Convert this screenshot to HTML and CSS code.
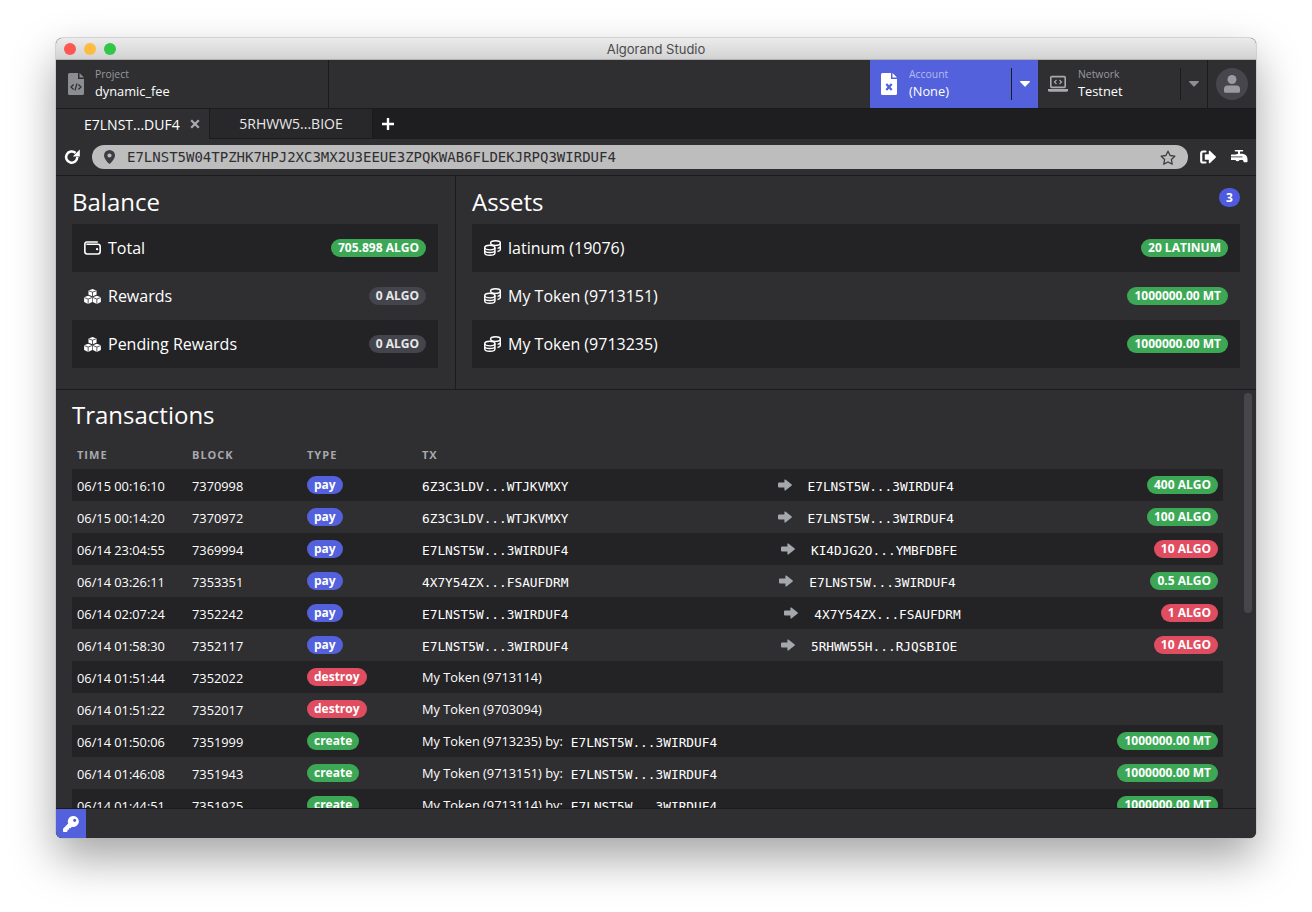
FILE: index.html
```html
<!DOCTYPE html>
<html lang="en">
<head>
<meta charset="utf-8">
<title>Algorand Studio</title>
<link rel="stylesheet" href="styles.css">
</head>
<body>
<svg class="defs" aria-hidden="true">
  <symbol id="file" viewBox="0 0 16 22"><path fill="currentColor" d="M1.500 0H10v6h6v14.500a1.500 1.500 0 0 1-1.500 1.500h-13A1.500 1.500 0 0 1 0 20.500v-19A1.500 1.500 0 0 1 1.500 0zM11.500 0 16 4.500h-4.500z"/></symbol>
  <symbol id="wallet" viewBox="0 0 16 14" preserveAspectRatio="none"><path d="M13 1H3A2.200 2.200 0 0 0 .8 3.200v7.600A2.200 2.200 0 0 0 3 13h10a2.200 2.200 0 0 0 2.200-2.200V5.500A2.200 2.200 0 0 0 13 3.300H2.200" fill="none" stroke="currentColor" stroke-width="1.500"/><circle cx="12.300" cy="8.200" r="1.100" fill="currentColor"/></symbol>
  <symbol id="cubes" viewBox="0 0 16 14" preserveAspectRatio="none"><path fill="currentColor" d="M8 0l3.800 1.400v3.900L8 6.800 4.200 5.300V1.400zM3.900 6.300l3.800 1.500v4.300l-3.800 1.900-3.800-1.900V7.800zM12.100 6.300l3.800 1.500v4.300l-3.800 1.900-3.800-1.900V7.800z"/><path fill="none" stroke="#232325" stroke-width=".7" d="M4.400 1.600 8 3l3.600-1.400M8 3v3.500M.3 8 3.900 9.400 7.500 8M3.900 9.400v4.400M8.500 8l3.600 1.400L15.700 8M12.100 9.400v4.400"/></symbol>
  <symbol id="coins" viewBox="0 0 16 16" preserveAspectRatio="none"><g fill="none" stroke="currentColor" stroke-width="1.350"><ellipse cx="10.800" cy="3" rx="4.600" ry="2.300"/><path d="M15.400 3v6.500c0 1-1.200 1.700-2.700 2M15.400 6.300c0 1-1.200 1.800-2.700 2"/><ellipse cx="5.500" cy="7.500" rx="4.800" ry="2.300"/><path d="M.7 7.500v5.500c0 1.300 2.200 2.200 4.800 2.200s4.800-.9 4.800-2.200V7.500M.7 10.300c0 1.300 2.200 2.200 4.800 2.200s4.800-.9 4.800-2.200"/></g></symbol>
  <symbol id="arrow" viewBox="0 0 14 12"><path fill="currentColor" d="M7.400.6l6 4.600a1 1 0 0 1 0 1.600l-6 4.600a.6.6 0 0 1-1-.5V8.500H1a1 1 0 0 1-1-1v-3a1 1 0 0 1 1-1h5.400V1.100a.6.6 0 0 1 1-.5z"/></symbol>
  <symbol id="caret" viewBox="0 0 10 6"><path fill="currentColor" d="M.6 0h8.800c.5 0 .8.600.4 1L5.400 5.600a.6.6 0 0 1-.8 0L.2 1C-.2.600.1 0 .6 0z"/></symbol>
</svg>
<div class="window">
  <div class="titlebar">
    <span class="light red"></span><span class="light yellow"></span><span class="light green"></span>
    <span class="title">Algorand Studio</span>
  </div>
  <header class="topbar">
    <div class="cell project">
      <svg class="i-file dim" width="16" height="22"><use href="#file"/><path d="M5.600 11.500 3 14l2.600 2.500M10.400 11.500 13 14l-2.600 2.500M9 10.500 7 17.500" fill="none" stroke="#2f2f32" stroke-width="1.200"/></svg>
      <div class="cell-text"><span class="cell-label">Project</span><span class="cell-value">dynamic_fee</span></div>
    </div>
    <div class="spacer"></div>
    <div class="cell account">
      <svg class="i-file" width="16" height="22"><use href="#file"/><path d="M5.300 11 10.700 17M10.700 11 5.300 17" fill="none" stroke="#5361dc" stroke-width="2.200"/></svg>
      <div class="cell-text"><span class="cell-label">Account</span><span class="cell-value">(None)</span></div>
      <div class="drop"><svg class="caret" width="10" height="6"><use href="#caret"/></svg></div>
    </div>
    <div class="cell network">
      <svg class="i-laptop" width="20" height="18" viewBox="0 0 20 18"><rect x="2.800" y="1.600" width="14.400" height="10.800" rx="1" fill="none" stroke="currentColor" stroke-width="1.600"/><path d="M0 14h20v1.200a1.500 1.500 0 0 1-1.500 1.500h-17A1.500 1.500 0 0 1 0 15.200z" fill="currentColor"/><path d="M8.500 5 6.500 7l2 2M11.500 5l2 2-2 2" fill="none" stroke="currentColor" stroke-width="1.200"/></svg>
      <div class="cell-text"><span class="cell-label">Network</span><span class="cell-value">Testnet</span></div>
      <div class="drop"><svg class="caret" width="10" height="6"><use href="#caret"/></svg></div>
    </div>
    <div class="user">
      <div class="avatar"><svg width="16" height="18" viewBox="0 0 16 18"><circle cx="8" cy="4.500" r="4.500" fill="currentColor"/><path d="M3.500 10.500h9A3.500 3.500 0 0 1 16 14v2.200a1.500 1.500 0 0 1-1.500 1.500h-13A1.500 1.500 0 0 1 0 16.200V14a3.500 3.500 0 0 1 3.500-3.500z" fill="currentColor"/></svg></div>
    </div>
  </header>
  <nav class="tabs">
    <div class="tab active"><span>E7LNST...DUF4</span><svg class="close" width="10" height="10" viewBox="0 0 10 10"><path d="M1.200 1.200l7.600 7.600M8.800 1.200 1.200 8.800" stroke="currentColor" stroke-width="2.200" fill="none"/></svg></div>
    <div class="tab second"><span>5RHWW5...BIOE</span></div>
    <div class="add"><svg width="12" height="12" viewBox="0 0 12 12"><path d="M6 .5v11M.5 6h11" stroke="currentColor" stroke-width="2.400" fill="none" stroke-linecap="round"/></svg></div>
  </nav>
  <div class="addressbar">
    <svg class="reload" width="16" height="16" viewBox="0 0 16 16"><path d="M13.300 8a5.600 5.600 0 1 1-1.700-4" fill="none" stroke="currentColor" stroke-width="2.500"/><path d="M15.800.6v7H8.800z" fill="currentColor"/></svg>
    <div class="pill">
      <svg class="pin" width="11" height="14" viewBox="0 0 11 14"><path fill-rule="evenodd" fill="#3d3e42" d="M5.500 0A5.500 5.500 0 0 1 11 5.500C11 8.500 7 13 5.500 14 4 13 0 8.500 0 5.500A5.500 5.500 0 0 1 5.500 0zm0 3.400a2.100 2.100 0 1 0 0 4.200 2.100 2.100 0 0 0 0-4.200z"/></svg>
      <span class="address">E7LNST5W04TPZHK7HPJ2XC3MX2U3EEUE3ZPQKWAB6FLDEKJRPQ3WIRDUF4</span>
      <svg class="star" width="16" height="15" viewBox="0 0 16 15"><path d="M8 1.200l2.100 4.300 4.700.7-3.400 3.300.8 4.700L8 12l-4.200 2.200.8-4.700L1.200 6.200l4.700-.7z" fill="none" stroke="#3d3e42" stroke-width="1.300" stroke-linejoin="round"/></svg>
    </div>
    <svg class="signout" width="16" height="14" viewBox="0 0 16 14"><path d="M5.500 1.500H3A1.800 1.800 0 0 0 1.200 3.300v7.400A1.800 1.800 0 0 0 3 12.500h2.500" fill="none" stroke="currentColor" stroke-width="2.200" stroke-linecap="round"/><path fill="currentColor" d="M9.800.8l5.800 5.500a1 1 0 0 1 0 1.400l-5.800 5.500a.6.6 0 0 1-1-.4V9.700H4.800V4.300h4V1.200a.6.6 0 0 1 1-.4z"/></svg>
    <svg class="faucet" width="17" height="14" viewBox="0 0 17 14"><path fill="currentColor" d="M4.500 0h7a.8.800 0 0 1 0 1.600h-2.500v2.200h2.300a5.200 5.200 0 0 1 5.200 5.200v2.600a.6.6 0 0 1-.6.6h-2.800a.6.6 0 0 1-.6-.6c0-1-.6-1.600-1.500-1.600H8.600c-.5.800-1.200 1.200-2.100 1.200s-1.600-.4-2.100-1.200H.6a.6.6 0 0 1-.6-.6V5a.6.6 0 0 1 .6-.6h3.900l2.500-.6V1.600H4.500a.8.800 0 0 1 0-1.600z"/><rect y="6.500" width="11.500" height=".8" fill="#2f2f32"/></svg>
  </div>
  <main class="content">
    <section class="summary">
      <div class="panel balance">
        <h2>Balance</h2>
        <ul class="list">
          <li><svg class="li-icon" width="17" height="14"><use href="#wallet"/></svg><span class="li-text">Total</span><span class="badge green">705.898 ALGO</span></li>
          <li><svg class="li-icon" width="17" height="15"><use href="#cubes"/></svg><span class="li-text">Rewards</span><span class="badge gray">0 ALGO</span></li>
          <li><svg class="li-icon" width="17" height="15"><use href="#cubes"/></svg><span class="li-text">Pending Rewards</span><span class="badge gray">0 ALGO</span></li>
        </ul>
      </div>
      <div class="panel assets">
        <h2>Assets</h2>
        <span class="count">3</span>
        <ul class="list">
          <li><svg class="li-icon" width="17" height="16"><use href="#coins"/></svg><span class="li-text">latinum (19076)</span><span class="badge green">20 LATINUM</span></li>
          <li><svg class="li-icon" width="17" height="16"><use href="#coins"/></svg><span class="li-text">My Token (9713151)</span><span class="badge green">1000000.00 MT</span></li>
          <li><svg class="li-icon" width="17" height="16"><use href="#coins"/></svg><span class="li-text">My Token (9713235)</span><span class="badge green">1000000.00 MT</span></li>
        </ul>
      </div>
    </section>
    <section class="transactions">
      <h2>Transactions</h2>
      <div class="thead"><span>Time</span><span>Block</span><span>Type</span><span>TX</span></div>
      <div class="row"><span>06/15 00:16:10</span><span>7370998</span><span class="type"><b class="badge blue">pay</b></span>
        <div class="tx"><code class="from">6Z3C3LDV...WTJKVMXY</code><div class="dest"><svg class="arrow" width="14" height="12"><use href="#arrow"/></svg><code>E7LNST5W...3WIRDUF4</code></div><b class="badge green">400 ALGO</b></div></div>
      <div class="row"><span>06/15 00:14:20</span><span>7370972</span><span class="type"><b class="badge blue">pay</b></span>
        <div class="tx"><code class="from">6Z3C3LDV...WTJKVMXY</code><div class="dest"><svg class="arrow" width="14" height="12"><use href="#arrow"/></svg><code>E7LNST5W...3WIRDUF4</code></div><b class="badge green">100 ALGO</b></div></div>
      <div class="row"><span>06/14 23:04:55</span><span>7369994</span><span class="type"><b class="badge blue">pay</b></span>
        <div class="tx"><code class="from">E7LNST5W...3WIRDUF4</code><div class="dest"><svg class="arrow" width="14" height="12"><use href="#arrow"/></svg><code>KI4DJG2O...YMBFDBFE</code></div><b class="badge red">10 ALGO</b></div></div>
      <div class="row"><span>06/14 03:26:11</span><span>7353351</span><span class="type"><b class="badge blue">pay</b></span>
        <div class="tx"><code class="from">4X7Y54ZX...FSAUFDRM</code><div class="dest"><svg class="arrow" width="14" height="12"><use href="#arrow"/></svg><code>E7LNST5W...3WIRDUF4</code></div><b class="badge green">0.5 ALGO</b></div></div>
      <div class="row"><span>06/14 02:07:24</span><span>7352242</span><span class="type"><b class="badge blue">pay</b></span>
        <div class="tx"><code class="from">E7LNST5W...3WIRDUF4</code><div class="dest"><svg class="arrow" width="14" height="12"><use href="#arrow"/></svg><code>4X7Y54ZX...FSAUFDRM</code></div><b class="badge red">1 ALGO</b></div></div>
      <div class="row"><span>06/14 01:58:30</span><span>7352117</span><span class="type"><b class="badge blue">pay</b></span>
        <div class="tx"><code class="from">E7LNST5W...3WIRDUF4</code><div class="dest"><svg class="arrow" width="14" height="12"><use href="#arrow"/></svg><code>5RHWW55H...RJQSBIOE</code></div><b class="badge red">10 ALGO</b></div></div>
      <div class="row"><span>06/14 01:51:44</span><span>7352022</span><span class="type"><b class="badge red">destroy</b></span>
        <div class="tx"><span class="asset">My Token (9713114)</span></div></div>
      <div class="row"><span>06/14 01:51:22</span><span>7352017</span><span class="type"><b class="badge red">destroy</b></span>
        <div class="tx"><span class="asset">My Token (9703094)</span></div></div>
      <div class="row"><span>06/14 01:50:06</span><span>7351999</span><span class="type"><b class="badge green">create</b></span>
        <div class="tx"><span class="asset">My Token (9713235) by:<code class="by">E7LNST5W...3WIRDUF4</code></span><b class="badge green">1000000.00 MT</b></div></div>
      <div class="row"><span>06/14 01:46:08</span><span>7351943</span><span class="type"><b class="badge green">create</b></span>
        <div class="tx"><span class="asset">My Token (9713151) by:<code class="by">E7LNST5W...3WIRDUF4</code></span><b class="badge green">1000000.00 MT</b></div></div>
      <div class="row"><span>06/14 01:44:51</span><span>7351925</span><span class="type"><b class="badge green">create</b></span>
        <div class="tx"><span class="asset">My Token (9713114) by:<code class="by">E7LNST5W...3WIRDUF4</code></span><b class="badge green">1000000.00 MT</b></div></div>
    </section>
    <div class="scrollbar"></div>
  </main>
  <footer class="statusbar">
    <div class="keybtn"><svg width="16" height="16" viewBox="0 0 16 16"><path fill="currentColor" fill-rule="evenodd" d="M10.500 0A5.500 5.500 0 1 1 8.900 10.800L7.500 12.200H6v1.500H4.500V15.200l-.8.800H.7a.7.700 0 0 1-.7-.7v-2.600l5.200-5.200A5.500 5.500 0 0 1 10.500 0zm1.200 2.700a1.600 1.600 0 1 0 0 3.200 1.600 1.600 0 0 0 0-3.200z"/></svg></div>
  </footer>
</div>
</body>
</html>
```
FILE: styles.css
```css
* { box-sizing: border-box; }
html, body { margin: 0; height: 912px; overflow: hidden; background: #fff; }
body { padding: 38px 56px 0; font-family: "Open Sans", sans-serif; color: #fff; }
h2, ul { margin: 0; padding: 0; }
ul { list-style: none; }
code { font-family: "DejaVu Sans Mono", monospace; font-size: 12.8px; }
.defs { position: absolute; width: 0; height: 0; }

.window { width: 1200px; height: 800px; display: flex; flex-direction: column; border-radius: 6px; overflow: hidden; background: #2f2f32; box-shadow: 0 0 0 .5px #b5b5b5, 0 20px 45px rgba(0,0,0,.36); }
.titlebar { flex: 0 0 22px; display: flex; align-items: center; gap: 8px; padding-left: 8px; position: relative; background: linear-gradient(#ebebeb, #d2d2d2); border-bottom: 1px solid #b1b1b1; }
.light { width: 12px; height: 12px; border-radius: 50%; }
.red { background: #fc5753; }
.yellow { background: #fdbc40; }
.green { background: #33c748; }
.title { position: absolute; left: 0; right: 0; text-align: center; font: 13px/22px "Inter", "Liberation Sans", sans-serif; color: #4a4a4a; }

.topbar { flex: 0 0 48px; display: flex; background: #2f2f32; }
.cell { display: flex; align-items: center; height: 48px; }
.project { width: 273px; padding-left: 12px; border-right: 1px solid #1b1b1d; }
.spacer { flex: 1; }
.account { width: 168px; padding-left: 11px; background: #5361dc; }
.network { width: 169px; padding-left: 10px; }
.i-file { flex: none; }
.dim { color: #8c8d91; }
.i-laptop { color: #a9aaad; flex: none; }
.cell-text { display: flex; flex-direction: column; margin-left: 11px; }
.account .cell-text { margin-left: 12px; }
.network .cell-text { margin-left: 10px; }
.cell-label { font-size: 10.400px; line-height: 15px; color: #98999d; }
.account .cell-label { color: #b3baf0; }
.cell-value { font-size: 12.800px; line-height: 19px; color: #fff; }
.drop { margin-left: auto; width: 27px; height: 32px; border-left: 1px solid #1b1b1d; display: flex; align-items: center; justify-content: center; }
.account .drop { color: #fff; }
.network .drop { color: #8d8e92; }
.caret { flex: none; }
.user { width: 49px; border-left: 1px solid #1b1b1d; display: flex; align-items: center; justify-content: center; }
.avatar { width: 32px; height: 32px; border-radius: 50%; background: #46464c; color: #9a9ba0; display: flex; align-items: center; justify-content: center; }

.tabs { flex: 0 0 31px; display: flex; background: #1e1e20; border-top: 1px solid #1b1b1d; }
.tab { height: 30px; display: flex; align-items: center; font-size: 14px; color: #e8e8e8; }
.tab.active { width: 154px; padding-left: 28px; gap: 10px; background: #2f2f32; color: #fff; border-right: 1px solid #1b1b1d; }
.tab.second { width: 163px; justify-content: center; background: #28282b; border-right: 1px solid #1b1b1d; border-bottom: 1px solid #1b1b1d; }
.close { color: #a9aaad; flex: none; }
.add { width: 30px; height: 30px; display: flex; align-items: center; justify-content: center; }

.addressbar { flex: 0 0 37px; display: flex; align-items: center; background: #2f2f32; border-bottom: 1px solid #1b1b1d; padding-left: 8px; }
.reload { flex: none; }
.pill { margin-left: 12px; width: 1096px; height: 24px; border-radius: 12px; background: #bdbdbd; display: flex; align-items: center; padding: 0 12px; }
.pin { flex: none; }
.address { margin-left: 12px; flex: 1; font: 14px "DejaVu Sans Mono", monospace; color: #2f2f32; }
.star { flex: none; }
.signout { margin-left: 12px; flex: none; }
.faucet { margin-left: 15px; flex: none; }

.content { flex: 1; position: relative; overflow: hidden; min-height: 0; }
.summary { display: flex; border-bottom: 1px solid #1b1b1d; }
.panel { position: relative; padding: 9px 16px 21px; }
.balance { width: 400px; padding-right: 17px; border-right: 1px solid #1b1b1d; }
.assets { flex: 1; }
h2 { font-size: 24px; font-weight: 400; line-height: 33px; margin-bottom: 6px; }
.list li { height: 48px; display: flex; align-items: center; padding: 0 12px; }
.list li:nth-child(odd) { background: #232325; }
.li-icon { flex: none; margin-right: 7px; }
.li-text { flex: 1; font-size: 16px; }
.count { position: absolute; top: 12px; right: 16px; width: 21px; height: 19px; border-radius: 10px; background: #4e5be0; font-size: 12px; font-weight: 700; line-height: 19px; text-align: center; }

.badge { display: inline-block; height: 18px; border-radius: 9px; padding: 0 7px; font-size: 12px; font-weight: 700; line-height: 17px; color: #fff; white-space: nowrap; flex: none; }
.badge.green { background: #3ca856; }
.badge.gray { background: #44454c; color: #e8e8e8; }
.badge.blue { background: #5361dc; }
.badge.red { background: #e14d60; }

.transactions { padding: 8px 33px 0 16px; }
.transactions h2 { margin-bottom: 0; }
.thead, .row { display: grid; grid-template-columns: 115px 115px 115px 1fr; padding-left: 5px; }
.thead { height: 38px; padding-top: 8px; align-items: center; font-size: 11px; font-weight: 700; letter-spacing: 1px; text-transform: uppercase; color: #a7a9ac; }
.row { height: 32px; align-items: center; font-size: 12.800px; padding-top: 1px; }
.row:nth-child(odd) { background: #232325; }
.type { display: flex; margin-top: -1px; }
.tx { display: flex; align-items: center; justify-content: space-between; padding-right: 5px; }
.tx > .badge { margin-top: -1px; }
.from { margin-right: 16px; }
.dest { display: flex; align-items: center; }
.dest code, .from { position: relative; top: 1px; }
.arrow { color: #a4a7ac; margin-right: 16px; position: relative; top: -1px; }
.asset { position: relative; top: -1px; }
.by { margin-left: 8px; position: relative; top: 1px; }
.scrollbar { position: absolute; top: 217px; right: 4px; width: 8px; height: 220px; border-radius: 4px; background: #46464c; }

.statusbar { flex: 0 0 30px; background: #2f2f32; border-top: 1px solid #1b1b1d; position: relative; z-index: 1; }
.keybtn { width: 30px; height: 29px; background: #5361dc; display: flex; align-items: center; justify-content: center; }
```
